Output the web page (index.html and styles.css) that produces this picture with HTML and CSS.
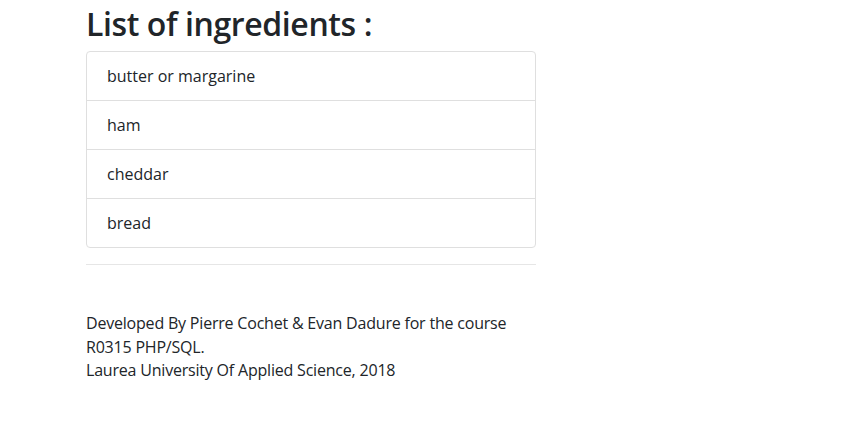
FILE: index.html
```html
<!DOCTYPE html>
<html lang="en">
<head>
<meta charset="utf-8">
<title>List of ingredients</title>
<link rel="stylesheet" href="styles.css">
</head>
<body>
<div class="container">
  <div class="main">
    <h2 class="title">List of ingredients :</h2>
    <ul class="list-group">
      <li class="list-item">butter or margarine</li>
      <li class="list-item">ham</li>
      <li class="list-item">cheddar</li>
      <li class="list-item">bread</li>
    </ul>
    <hr class="divider">
    <footer class="footer">
      <p>Developed By Pierre Cochet &amp; Evan Dadure for the course<br>R0315 PHP/SQL.<br>Laurea University Of Applied Science, 2018</p>
    </footer>
  </div>
</div>
</body>
</html>
```
FILE: styles.css
```css
* { box-sizing: border-box; }
html, body { margin: 0; padding: 0; background: #fff; }
body {
  font-family: "Open Sans", "Noto Sans", sans-serif;
  font-size: 16px;
  line-height: 1.5;
  color: #212529;
}
.container {
  width: 721px;
  margin: 0 auto;
  padding: 5px 15px 0;
}
.main { width: 450px; }
.title {
  font-size: 32px;
  font-weight: 600;
  letter-spacing: -0.4px;
  line-height: 1.2;
  margin: 0 0 8px;
}
.list-group {
  list-style: none;
  margin: 0;
  padding: 0;
  display: flex;
  flex-direction: column;
}
.list-item {
  padding: 12px 20px;
  border: 1px solid #dfdfdf;
  margin-bottom: -1px;
}
.list-item:first-child { border-top-left-radius: 4px; border-top-right-radius: 4px; }
.list-item:last-child { margin-bottom: 0; border-bottom-left-radius: 4px; border-bottom-right-radius: 4px; }
.divider {
  margin: 16px 0 47px;
  border: 0;
  border-top: 1px solid #e6e6e6;
}
.footer p { margin: 0; letter-spacing: -0.2px; line-height: 23.5px; }
```
